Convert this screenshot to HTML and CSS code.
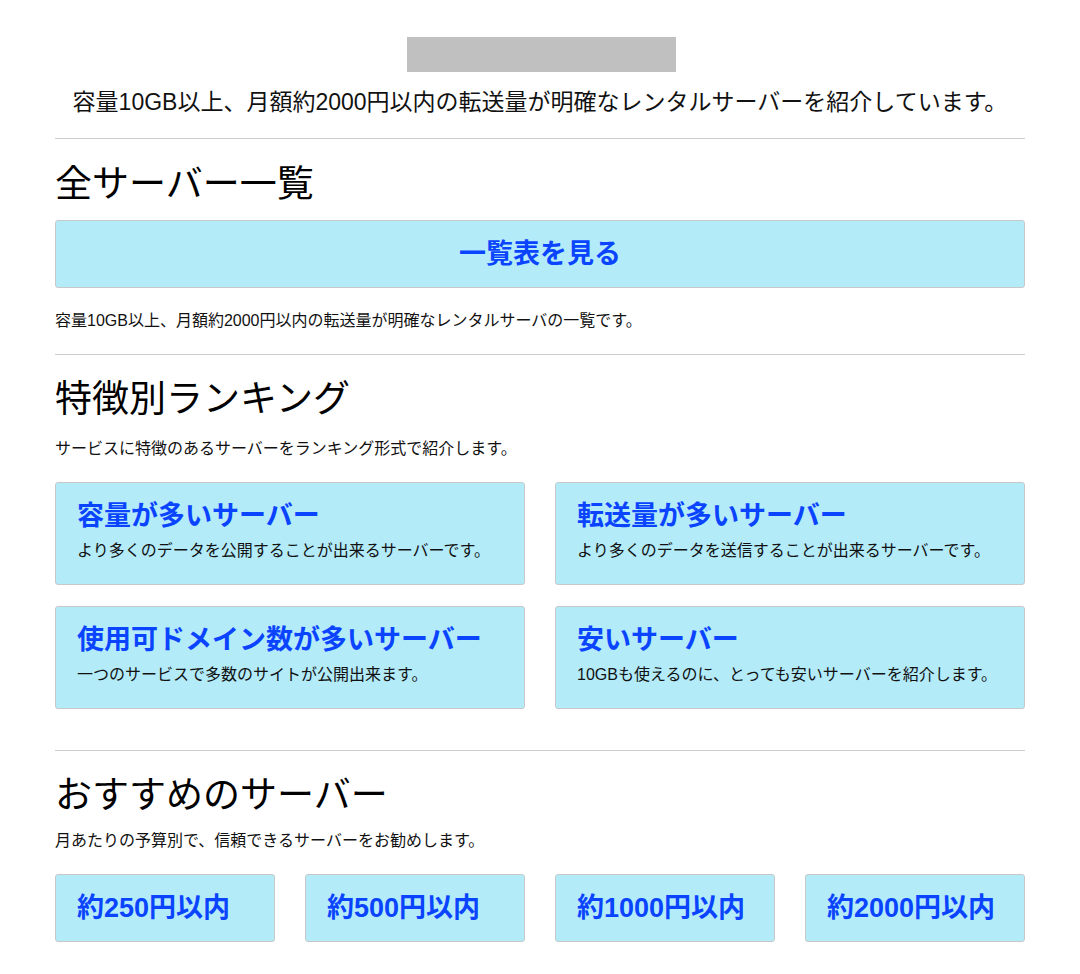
FILE: index.html
```html
<!DOCTYPE html>
<html lang="ja">
<head>
<meta charset="utf-8">
<title>レンタルサーバー</title>
<link rel="stylesheet" href="styles.css">
</head>
<body>
<div class="wrap">
  <header class="head">
    <div class="logo"></div>
    <p class="lead">容量10GB以上、月額約2000円以内の転送量が明確なレンタルサーバーを紹介しています。</p>
  </header>
  <hr class="rule">
  <section class="sec sec-all">
    <h2 class="title">全サーバー一覧</h2>
    <a class="btn-wide" href="#">一覧表を見る</a>
    <p class="desc desc-after">容量10GB以上、月額約2000円以内の転送量が明確なレンタルサーバの一覧です。</p>
  </section>
  <hr class="rule">
  <section class="sec sec-rank">
    <h2 class="title">特徴別ランキング</h2>
    <p class="desc">サービスに特徴のあるサーバーをランキング形式で紹介します。</p>
    <div class="grid2">
      <a class="card" href="#"><span class="card-t">容量が多いサーバー</span><span class="card-d">より多くのデータを公開することが出来るサーバーです。</span></a>
      <a class="card" href="#"><span class="card-t">転送量が多いサーバー</span><span class="card-d">より多くのデータを送信することが出来るサーバーです。</span></a>
      <a class="card" href="#"><span class="card-t">使用可ドメイン数が多いサーバー</span><span class="card-d">一つのサービスで多数のサイトが公開出来ます。</span></a>
      <a class="card" href="#"><span class="card-t">安いサーバー</span><span class="card-d">10GBも使えるのに、とっても安いサーバーを紹介します。</span></a>
    </div>
  </section>
  <hr class="rule rule-wide">
  <section class="sec sec-rec">
    <h2 class="title">おすすめのサーバー</h2>
    <p class="desc desc-rec">月あたりの予算別で、信頼できるサーバーをお勧めします。</p>
    <div class="grid4">
      <a class="price" href="#">約250円以内</a>
      <a class="price" href="#">約500円以内</a>
      <a class="price" href="#">約1000円以内</a>
      <a class="price" href="#">約2000円以内</a>
    </div>
  </section>
</div>
</body>
</html>
```
FILE: styles.css
```css
html, body {
  margin: 0;
  padding: 0;
  background: #ffffff;
}
body {
  font-family: "Liberation Sans", "Noto Sans CJK JP", sans-serif;
  color: #111111;
}
.wrap {
  width: 970px;
  margin: 0 auto;
  padding-bottom: 40px;
}
.head {
  padding-top: 37px;
  display: flex;
  flex-direction: column;
  align-items: center;
}
.logo {
  width: 269px;
  height: 35px;
  margin-left: 3px;
  background: #c0c0c0;
}
.lead {
  margin: 13px 0 0;
  font-size: 23px;
  line-height: 34px;
  text-align: center;
}
.rule {
  margin: 19px 0 0;
  border: 0;
  border-top: 1px solid #cccccc;
  height: 0;
}
.rule-wide {
  margin-top: 41px;
}
.sec {
  display: flex;
  flex-direction: column;
}
.title {
  margin: 24px 0 0;
  font-size: 37px;
  line-height: 44px;
  font-weight: normal;
  color: #000000;
}
.sec-rank .title, .sec-rec .title {
  margin-top: 23px;
}
.desc {
  margin: 16px 0 0;
  font-size: 16px;
  line-height: 22px;
}
.desc-after {
  margin: 22px 0 3px;
}
.desc-rec {
  margin-top: 12px;
}
.btn-wide {
  margin-top: 13px;
  height: 60px;
  padding-bottom: 6px;
  display: flex;
  align-items: center;
  justify-content: center;
  background: #b3ebf9;
  border: 1px solid #c8c8c8;
  border-radius: 3px;
  color: #0a44ff;
  font-weight: bold;
  font-size: 27px;
  text-decoration: none;
}
.grid2 {
  margin-top: 22px;
  display: grid;
  grid-template-columns: 1fr 1fr;
  column-gap: 30px;
  row-gap: 21px;
}
.card {
  height: 101px;
  box-sizing: content-box;
  display: flex;
  flex-direction: column;
  padding: 0 21px;
  background: #b3ebf9;
  border: 1px solid #c8c8c8;
  border-radius: 3px;
  text-decoration: none;
}
.card-t {
  margin-top: 16px;
  font-size: 27px;
  line-height: 34px;
  font-weight: bold;
  color: #0a44ff;
}
.card-d {
  margin-top: 7px;
  font-size: 16px;
  line-height: 22px;
  color: #111111;
}
.grid4 {
  margin-top: 22px;
  display: grid;
  grid-template-columns: repeat(4, 1fr);
  column-gap: 30px;
}
.price {
  height: 60px;
  padding: 0 21px 6px;
  display: flex;
  align-items: center;
  background: #b3ebf9;
  border: 1px solid #c8c8c8;
  border-radius: 3px;
  color: #0a44ff;
  font-weight: bold;
  font-size: 27px;
  text-decoration: none;
}
```
